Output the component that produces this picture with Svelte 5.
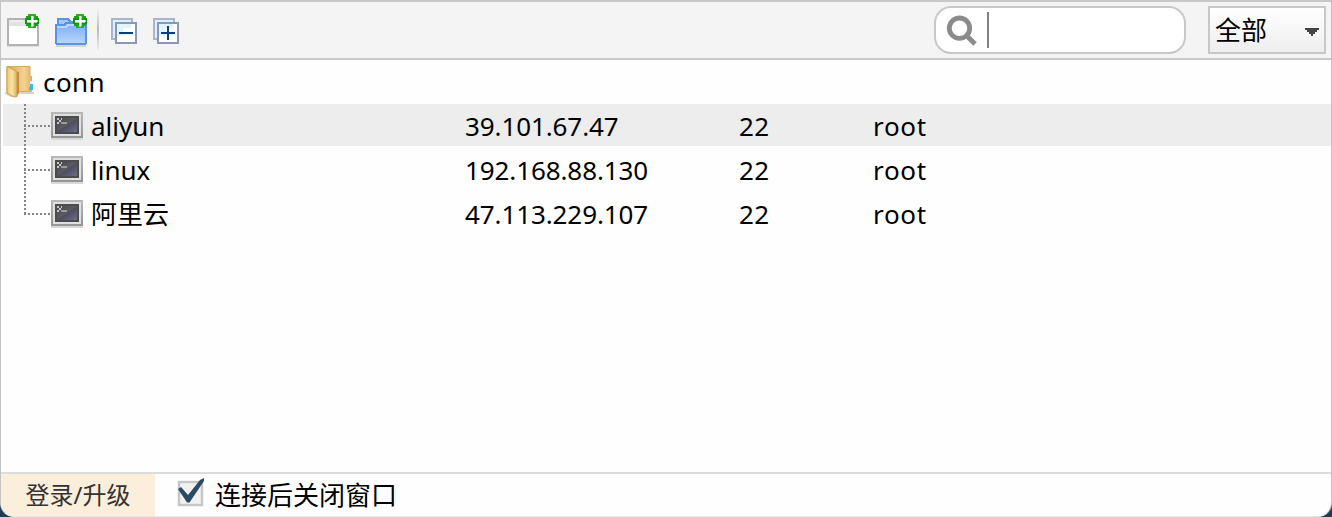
<script>
  const hosts = [
    { name: 'aliyun', ip: '39.101.67.47', port: 22, user: 'root', active: true },
    { name: 'linux', ip: '192.168.88.130', port: 22, user: 'root' },
    { name: '阿里云', ip: '47.113.229.107', port: 22, user: 'root' }
  ];
  let query = $state('');
</script>

{#snippet badge()}
  <rect x="28" y="14" width="8" height="14" fill="#2cae22" />
  <rect x="26" y="16" width="12" height="10" fill="#18a416" />
  <rect x="25" y="18" width="14" height="6" fill="#0c9808" />
  <path d="M31 16h2v4h4v2h-4v4h-2v-4h-4v-2h4z" fill="#fff" stroke="#fff" stroke-width=".6" />
{/snippet}

{#snippet stacked(plus)}
  <svg class="tool" width="26" height="26" viewBox="0 0 26 26" shape-rendering="crispEdges">
    <rect x="1" y="1" width="20" height="20" fill="#d9f2fd" stroke="#a9b4cd" stroke-width="2" />
    <rect x="5" y="5" width="20" height="20" fill="#fff" stroke="#8b97b4" stroke-width="2" />
    <path d="M6 6h14v4h-8v8h-6z" fill="#dff5fe" />
    <path d="M12 16h12v2h-12z" fill="#eef9ff" />
    <rect x="8" y="14" width="14" height="2" fill="#063f7c" />
    {#if plus}<rect x="14" y="8" width="2" height="14" fill="#063f7c" />{/if}
  </svg>
{/snippet}

<div class="desk">
  <div class="window">
    <header>
      <svg class="new" width="40" height="34" viewBox="0 14 40 34" shape-rendering="crispEdges">
        <rect x="8" y="19" width="30" height="26" fill="#fff" stroke="#b3b3b3" stroke-width="2" />
        <rect x="9" y="20" width="28" height="6" fill="#e3e1e4" />
        <rect x="9" y="20" width="14" height="2" fill="#eeedf0" />
        <rect x="7" y="46" width="32" height="1" fill="#dedede" />
        {@render badge()}
      </svg>
      <svg class="folder" width="42" height="34" viewBox="0 14 42 34" shape-rendering="crispEdges">
        <defs>
          <linearGradient id="blue" x2="0" y2="1">
            <stop stop-color="#80aff0" /><stop offset=".5" stop-color="#9ac2f7" /><stop offset="1" stop-color="#b9d8fd" />
          </linearGradient>
        </defs>
        <path d="M5 25v-6h10l3 3h13v5" fill="#8ab5ef" stroke="#5b95e0" stroke-width="2" />
        <path d="M6 20h8l3 4h12v2h-23z" fill="#a3c8f7" />
        <path d="M3 25h8l2-2h20v20l-1 1h-28l-1-1z" fill="url(#blue)" stroke="#5a93df" stroke-width="2" />
        <path d="M4 26h8l2-2h18v2h-17l-2 2h-9z" fill="#b9d8fc" />
        <rect x="3" y="45" width="30" height="2" fill="#d2d6dd" />
        <g transform="translate(-5 0)">{@render badge()}</g>
      </svg>
      <span class="divider"></span>
      {@render stacked(false)}
      {@render stacked(true)}
      <label class="search">
        <svg width="32" height="32" viewBox="0 0 32 32" fill="none" stroke="#8b8b8b" stroke-width="4.8">
          <circle cx="13.5" cy="14.2" r="10.2" />
          <path d="M20.500 21.500l8.500 8.500" stroke-width="5" />
        </svg>
        <span class="caret"></span>
        <input bind:value={query} aria-label="search" />
      </label>
      <button class="select">
        <span>全部</span>
        <svg width="14" height="8" viewBox="0 0 14 8" shape-rendering="crispEdges">
          <path d="M0 0h14v2h-2v2h-2v2h-2v2h-2v-2h-2v-2h-2v-2h-2z" fill="#444" />
        </svg>
      </button>
    </header>

    <main>
      <div class="root">
        <svg width="30" height="36" viewBox="0 0 30 36">
          <defs>
            <linearGradient id="leaf"><stop stop-color="#ecc978" /><stop offset=".5" stop-color="#fae3a3" /><stop offset="1" stop-color="#d8ae5c" /></linearGradient>
            <linearGradient id="back"><stop stop-color="#d7a64f" /><stop offset=".7" stop-color="#f3d290" /><stop offset="1" stop-color="#e0b468" /></linearGradient>
          </defs>
          <path d="M0 28h29v2h-15l-2 3h-6l-6-3z" fill="#d8d4cd" />
          <path d="M2 2.500h23v10h1.500v15h-24.500z" fill="url(#back)" stroke="#d6ab5f" />
          <path d="M25 17h2v5h-2z" fill="#d5f3fc" />
          <path d="M25 20h3v6h-4v-3h1z" fill="#39bdec" />
          <path d="M2 2.500l10 5v25l-3 .5-7-4z" fill="url(#leaf)" stroke="#cfa04d" />
          <path d="M12 8h2v21l-2 2z" fill="#c08d3b" />
        </svg>
        <span>conn</span>
      </div>
      <div class="tree">
        {#each hosts as h, i}
          <div class="row" class:active={h.active}>
            <svg class="branch" width="28" height="44" viewBox="0 0 28 44" stroke="#858585" stroke-width="2" stroke-dasharray="2 2" shape-rendering="crispEdges">
              <path d={i === hosts.length - 1 ? 'M2 0V23' : 'M2 0V44'} />
              <path d="M1 22H27" />
            </svg>
            <svg class="term" width="32" height="28" viewBox="0 0 32 28" shape-rendering="crispEdges">
              <defs>
                <linearGradient id="screen" x2="1" y2="1"><stop stop-color="#4a4a4c" /><stop offset=".48" stop-color="#5b5b60" /><stop offset=".52" stop-color="#4d4d60" /><stop offset="1" stop-color="#6c6c84" /></linearGradient>
                <linearGradient id="frame" x2="0" y2="1"><stop stop-color="#b8b8b8" /><stop offset="1" stop-color="#959595" /></linearGradient>
              </defs>
              <rect width="32" height="26" fill="url(#frame)" />
              <rect x="2" y="2" width="28" height="22" fill="#dfdfdf" />
              <rect x="4" y="4" width="24" height="18" fill="#4c4c4e" />
              <rect x="6" y="6" width="20" height="14" fill="url(#screen)" />
              <path d="M6 6h2v2h2v2h-2v2h-2v-2h2v-2h-2zM10 6h1v2h-1z" fill="#c8c8c8" />
              <path d="M10 10h6v2h-6z" fill="#9a9a9a" />
              <rect y="26" width="32" height="2" fill="#d8d8d8" />
            </svg>
            <span class="name">{h.name}</span>
            <span class="ip">{h.ip}</span>
            <span class="port">{h.port}</span>
            <span class="user">{h.user}</span>
          </div>
        {/each}
      </div>
    </main>

    <footer>
      <button class="login">登录/升级</button>
      <svg width="30" height="32" viewBox="0 0 30 32">
        <rect x="2" y="6" width="23" height="23" fill="#f1f1f1" stroke="#c6c6c6" stroke-width="2.4" />
        <path d="M1 13l3-2 7 8L23 4l4-2v3L12.500 26.500h-2.500z" fill="#2b4a64" />
      </svg>
      <span class="keep">连接后关闭窗口</span>
    </footer>
  </div>
</div>

<style>
  .desk {
    width: 1332px;
    height: 517px;
    background: #1f3c50;
    font: 26px/44px "Noto Sans", "Noto Sans CJK SC", sans-serif;
    color: #000;
    overflow: hidden;
  }
  .window {
    box-sizing: border-box;
    height: 517px;
    display: flex;
    flex-direction: column;
    background: #fefefe;
    border: 1px solid #c4c4c4;
    border-top: 2px solid #c8c8c8;
    border-bottom-color: #e8e8e8;
    border-radius: 0 0 14px 14px;
    overflow: hidden;
  }
  header {
    box-sizing: border-box;
    height: 58px;
    flex: none;
    display: flex;
    align-items: flex-start;
    background: #f4f4f4;
    border-bottom: 2px solid #c8c8c8;
  }
  svg { display: block; flex: none; }
  .new { margin: 12px 0 0 -1px; }
  .folder { margin: 12px 0 0 13px; }
  .divider {
    width: 2px;
    height: 44px;
    margin: 6px 12px 0 2px;
    background: linear-gradient(#f4f4f4, #b5bac0 50%, #f4f4f4);
  }
  .tool { margin: 16px 16px 0 0; }
  .search {
    box-sizing: border-box;
    width: 252px;
    height: 48px;
    margin: 4px 22px 0 auto;
    display: flex;
    align-items: center;
    background: #fff;
    border: 2px solid #c8c8c8;
    border-radius: 17px;
    padding-left: 10px;
  }
  .caret {
    width: 2px;
    height: 36px;
    margin-left: 9px;
    background: #808080;
  }
  input {
    width: 180px;
    border: 0;
    outline: 0;
    background: none;
    font: inherit;
  }
  button {
    font: inherit;
    color: inherit;
    margin: 0;
    padding: 0;
    border: 0;
  }
  .select {
    box-sizing: border-box;
    width: 118px;
    height: 48px;
    margin: 4px 5px 0 0;
    padding: 0 5px 0 5px;
    display: flex;
    align-items: center;
    justify-content: space-between;
    border: 2px solid #c8c8c8;
    background: linear-gradient(#fff, #eee);
  }
  .select svg { margin-top: 4px; }
  main { flex: 1; }
  .root {
    height: 44px;
    display: flex;
    padding-left: 4px;
  }
  .root span { letter-spacing: 0.4px; }
  .root svg { margin: 4px 8px 0 0; }
  .row {
    height: 44px;
    display: grid;
    grid-template-columns: 28px 40px 374px 274px 134px auto;
    padding-left: 20px;
    margin-left: 2px;
  }
  .row.active {
    background: linear-gradient(#ededed, #ededed) 0 0 / 100% 42px no-repeat;
  }
  .term { margin-top: 8px; }
  .name { white-space: nowrap; }
  .ip { letter-spacing: -0.1px; }
  .port { letter-spacing: 0.3px; }
  .user { letter-spacing: 0.7px; }
  footer {
    height: 44px;
    flex: none;
    box-sizing: border-box;
    display: flex;
    border-top: 2px solid #dcdcdc;
  }
  .login {
    width: 154px;
    height: 42px;
    background: #fbeedb;
    color: #333;
    font-size: 24px;
    line-height: 42px;
  }
  footer svg { margin: 2px 8px 0 22px; }
  .keep { line-height: 42px; }
</style>
